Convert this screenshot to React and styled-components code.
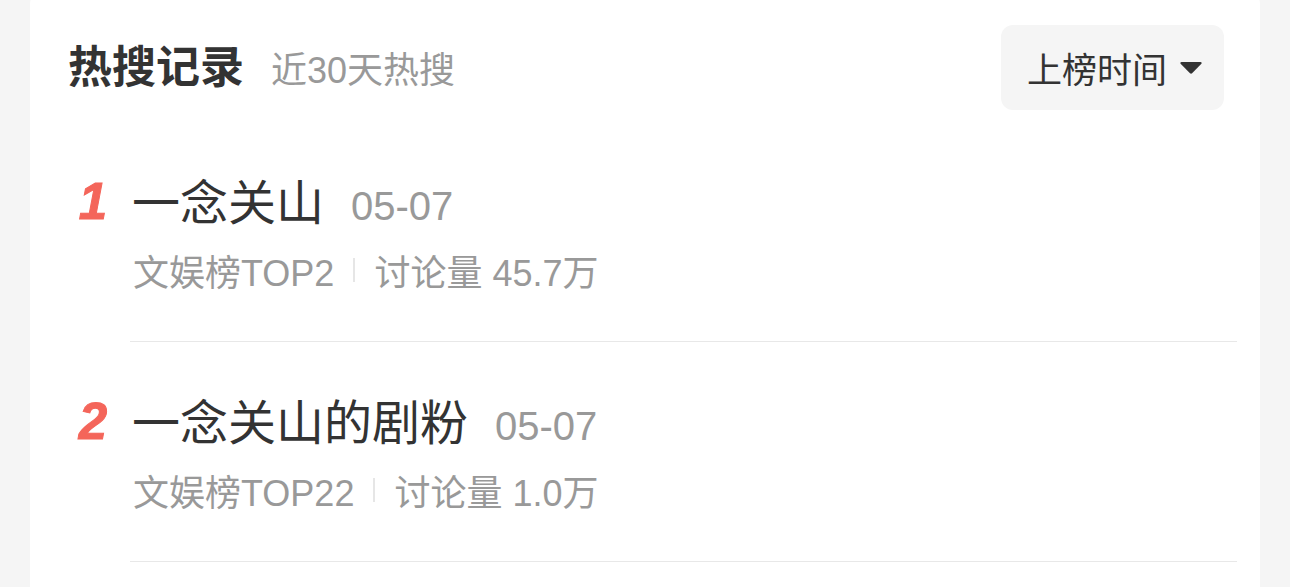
import React from "react";
import styled, { createGlobalStyle } from "styled-components";

const GlobalStyle = createGlobalStyle`
  html, body {
    margin: 0;
    padding: 0;
    background: #f5f5f5;
  }
  body {
    font-family: "Liberation Sans", Arial, "Noto Sans CJK SC", sans-serif;
    color: #333;
  }
`;

const Page = styled.div`
  padding: 0 30px;
  height: 587px;
  overflow: hidden;
`;

const Card = styled.section`
  margin-top: -12px;
  background: #fff;
  border-radius: 16px;
  padding: 0 23px 40px 38px;
`;

const Header = styled.header`
  display: flex;
  align-items: center;
  justify-content: space-between;
  padding: 37px 13px 12px 0;
`;

const HeaderTitles = styled.div`
  display: flex;
  align-items: baseline;
  gap: 27px;
`;

const Title = styled.h2`
  margin: 0;
  font-size: 44px;
  font-weight: 700;
  color: #333;
  line-height: 1;
`;

const Subtitle = styled.span`
  font-size: 36px;
  color: #999;
  line-height: 1;
`;

const SortButton = styled.button`
  display: flex;
  align-items: center;
  gap: 13px;
  height: 85px;
  padding: 0 22px 0 26px;
  border: none;
  border-radius: 12px;
  background: #f5f5f5;
  font-family: inherit;
  font-size: 35px;
  color: #333;
`;

const Caret = styled.svg`
  width: 22px;
  height: 13px;
  display: block;
`;

const List = styled.ul`
  list-style: none;
  margin: 0;
  padding: 0;
`;

const Item = styled.li`
  display: grid;
  grid-template-columns: 62px 1fr;
`;

const Rank = styled.span`
  padding: 50px 12px 0 0;
  text-align: center;
  font-size: 51px;
  line-height: 60px;
  font-weight: 700;
  font-style: italic;
  color: #f4655a;
  -webkit-text-stroke: 1px #f4655a;
  font-family: "Liberation Sans", Arial, sans-serif;
`;

const Body = styled.div`
  padding: 52px 0 46px;
  border-bottom: 1px solid #e8e8e8;
`;

const TitleRow = styled.div`
  display: flex;
  align-items: baseline;
  gap: 27px;
  height: 60px;
  line-height: 60px;
  padding-left: 2px;
`;

const Topic = styled.span`
  font-size: 48px;
  color: #333;
`;

const DateText = styled.span`
  font-size: 40px;
  color: #999;
`;

const Meta = styled.div`
  display: flex;
  align-items: center;
  gap: 19px;
  margin-top: 11px;
  height: 50px;
  padding-left: 3px;
  font-size: 36px;
  color: #999;
`;

const Divider = styled.i`
  width: 2px;
  height: 24px;
  background: #e6e6e6;
`;

const records = [
  { rank: 1, topic: "一念关山", date: "05-07", board: "文娱榜TOP2", volume: "45.7万" },
  { rank: 2, topic: "一念关山的剧粉", date: "05-07", board: "文娱榜TOP22", volume: "1.0万" },
];

export default function App() {
  return (
    <>
      <GlobalStyle />
      <Page>
        <Card>
          <Header>
            <HeaderTitles>
              <Title>热搜记录</Title>
              <Subtitle>近30天热搜</Subtitle>
            </HeaderTitles>
            <SortButton type="button">
              上榜时间
              <Caret viewBox="0 0 22 13">
                <path d="M1.5 1h19c1 0 1.5 1 .9 1.7l-9.3 9.6c-.6.6-1.5.6-2.1 0L.6 2.7C0 2 .5 1 1.5 1z" fill="#333" />
              </Caret>
            </SortButton>
          </Header>
          <List>
            {records.map((r) => (
              <Item key={r.rank}>
                <Rank>{r.rank}</Rank>
                <Body>
                  <TitleRow>
                    <Topic>{r.topic}</Topic>
                    <DateText>{r.date}</DateText>
                  </TitleRow>
                  <Meta>
                    <span>{r.board}</span>
                    <Divider />
                    <span>讨论量 {r.volume}</span>
                  </Meta>
                </Body>
              </Item>
            ))}
          </List>
        </Card>
      </Page>
    </>
  );
}
